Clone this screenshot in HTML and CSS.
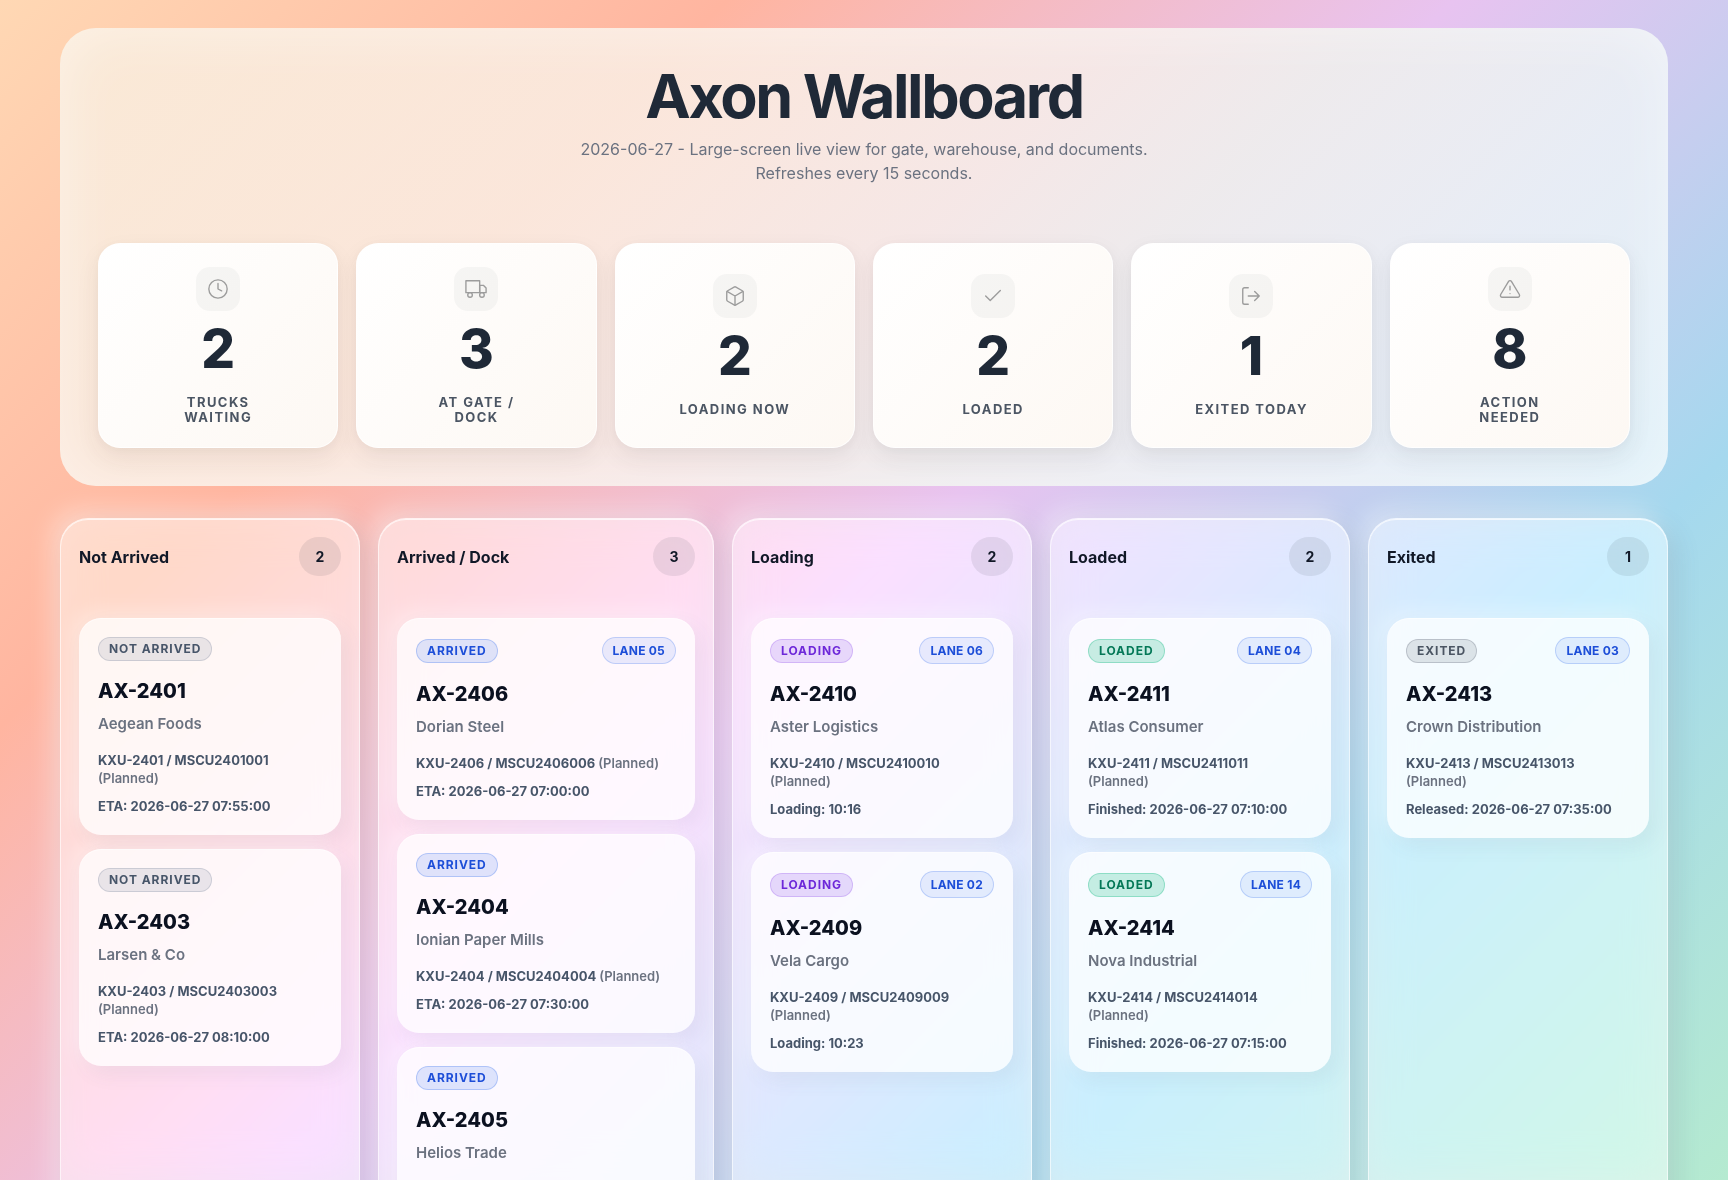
FILE: index.html
```html
<!DOCTYPE html>
<html lang="en">
<head>
<meta charset="utf-8">
<meta name="viewport" content="width=device-width, initial-scale=1">
<title>Axon Wallboard</title>
<link rel="stylesheet" href="styles.css">
</head>
<body>
<main class="page">
  <header class="hero">
    <h1 class="hero-title">Axon Wallboard</h1>
    <p class="hero-sub">2026-06-27 - Large-screen live view for gate, warehouse, and documents. Refreshes every 15 seconds.</p>
    <section class="stats" aria-label="Today's totals">
      <div class="stat">
        <span class="stat-icon"><svg viewBox="0 0 24 24"><circle cx="12" cy="12" r="10"/><path d="M12 6v6l4 2"/></svg></span>
        <strong class="stat-value">2</strong>
        <span class="stat-label">Trucks waiting</span>
      </div>
      <div class="stat">
        <span class="stat-icon"><svg viewBox="0 0 24 24"><path d="M1 3h15v13H1z"/><path d="M16 8h4l3 3v5h-7z"/><circle cx="5.5" cy="18.5" r="2.5"/><circle cx="18.5" cy="18.5" r="2.5"/></svg></span>
        <strong class="stat-value">3</strong>
        <span class="stat-label">At gate / dock</span>
      </div>
      <div class="stat">
        <span class="stat-icon"><svg viewBox="0 0 24 24"><path d="M21 16V8a2 2 0 0 0-1-1.73l-7-4a2 2 0 0 0-2 0l-7 4A2 2 0 0 0 3 8v8a2 2 0 0 0 1 1.73l7 4a2 2 0 0 0 2 0l7-4A2 2 0 0 0 21 16z"/><path d="M3.27 6.96L12 12.01l8.73-5.05M12 22.08V12"/></svg></span>
        <strong class="stat-value">2</strong>
        <span class="stat-label">Loading now</span>
      </div>
      <div class="stat">
        <span class="stat-icon"><svg viewBox="0 0 24 24"><path d="M20 6L9 17l-5-5"/></svg></span>
        <strong class="stat-value">2</strong>
        <span class="stat-label">Loaded</span>
      </div>
      <div class="stat">
        <span class="stat-icon"><svg viewBox="0 0 24 24"><path d="M9 21H5a2 2 0 0 1-2-2V5a2 2 0 0 1 2-2h4"/><path d="M16 17l5-5-5-5M21 12H9"/></svg></span>
        <strong class="stat-value">1</strong>
        <span class="stat-label">Exited today</span>
      </div>
      <div class="stat">
        <span class="stat-icon"><svg viewBox="0 0 24 24"><path d="M10.29 3.86L1.82 18a2 2 0 0 0 1.71 3h16.94a2 2 0 0 0 1.71-3L13.71 3.86a2 2 0 0 0-3.42 0z"/><path d="M12 9v4M12 17h.01"/></svg></span>
        <strong class="stat-value">8</strong>
        <span class="stat-label">Action needed</span>
      </div>
    </section>
  </header>

  <section class="board" aria-label="Truck board">
    <section class="column">
      <header class="column-head"><h2 class="column-title">Not Arrived</h2><span class="count">2</span></header>
      <article class="card">
        <div class="card-top"><span class="badge badge-slate">Not arrived</span></div>
        <h3 class="card-ref">AX-2401</h3>
        <p class="card-client">Aegean Foods</p>
        <p class="card-line">KXU-2401 / MSCU2401001 <span class="muted">(Planned)</span></p>
        <p class="card-line">ETA: 2026-06-27 07:55:00</p>
      </article>
      <article class="card">
        <div class="card-top"><span class="badge badge-slate">Not arrived</span></div>
        <h3 class="card-ref">AX-2403</h3>
        <p class="card-client">Larsen &amp; Co</p>
        <p class="card-line">KXU-2403 / MSCU2403003 <span class="muted">(Planned)</span></p>
        <p class="card-line">ETA: 2026-06-27 08:10:00</p>
      </article>
    </section>

    <section class="column">
      <header class="column-head"><h2 class="column-title">Arrived / Dock</h2><span class="count">3</span></header>
      <article class="card">
        <div class="card-top"><span class="badge badge-blue">Arrived</span><span class="lane">LANE 05</span></div>
        <h3 class="card-ref">AX-2406</h3>
        <p class="card-client">Dorian Steel</p>
        <p class="card-line">KXU-2406 / MSCU2406006 <span class="muted">(Planned)</span></p>
        <p class="card-line">ETA: 2026-06-27 07:00:00</p>
      </article>
      <article class="card">
        <div class="card-top"><span class="badge badge-blue">Arrived</span></div>
        <h3 class="card-ref">AX-2404</h3>
        <p class="card-client">Ionian Paper Mills</p>
        <p class="card-line">KXU-2404 / MSCU2404004 <span class="muted">(Planned)</span></p>
        <p class="card-line">ETA: 2026-06-27 07:30:00</p>
      </article>
      <article class="card card-open">
        <div class="card-top"><span class="badge badge-blue">Arrived</span></div>
        <h3 class="card-ref">AX-2405</h3>
        <p class="card-client">Helios Trade</p>
      </article>
    </section>

    <section class="column">
      <header class="column-head"><h2 class="column-title">Loading</h2><span class="count">2</span></header>
      <article class="card">
        <div class="card-top"><span class="badge badge-violet">Loading</span><span class="lane">LANE 06</span></div>
        <h3 class="card-ref">AX-2410</h3>
        <p class="card-client">Aster Logistics</p>
        <p class="card-line">KXU-2410 / MSCU2410010 <span class="muted">(Planned)</span></p>
        <p class="card-line">Loading: 10:16</p>
      </article>
      <article class="card">
        <div class="card-top"><span class="badge badge-violet">Loading</span><span class="lane">LANE 02</span></div>
        <h3 class="card-ref">AX-2409</h3>
        <p class="card-client">Vela Cargo</p>
        <p class="card-line">KXU-2409 / MSCU2409009 <span class="muted">(Planned)</span></p>
        <p class="card-line">Loading: 10:23</p>
      </article>
    </section>

    <section class="column">
      <header class="column-head"><h2 class="column-title">Loaded</h2><span class="count">2</span></header>
      <article class="card">
        <div class="card-top"><span class="badge badge-green">Loaded</span><span class="lane">LANE 04</span></div>
        <h3 class="card-ref">AX-2411</h3>
        <p class="card-client">Atlas Consumer</p>
        <p class="card-line">KXU-2411 / MSCU2411011 <span class="muted">(Planned)</span></p>
        <p class="card-line">Finished: 2026-06-27 07:10:00</p>
      </article>
      <article class="card">
        <div class="card-top"><span class="badge badge-green">Loaded</span><span class="lane">LANE 14</span></div>
        <h3 class="card-ref">AX-2414</h3>
        <p class="card-client">Nova Industrial</p>
        <p class="card-line">KXU-2414 / MSCU2414014 <span class="muted">(Planned)</span></p>
        <p class="card-line">Finished: 2026-06-27 07:15:00</p>
      </article>
    </section>

    <section class="column">
      <header class="column-head"><h2 class="column-title">Exited</h2><span class="count">1</span></header>
      <article class="card">
        <div class="card-top"><span class="badge badge-gray">Exited</span><span class="lane">LANE 03</span></div>
        <h3 class="card-ref">AX-2413</h3>
        <p class="card-client">Crown Distribution</p>
        <p class="card-line">KXU-2413 / MSCU2413013 <span class="muted">(Planned)</span></p>
        <p class="card-line">Released: 2026-06-27 07:35:00</p>
      </article>
    </section>
  </section>
</main>
</body>
</html>
```
FILE: styles.css
```css
*, *::before, *::after { box-sizing: border-box; }

html { min-height: 100%; }

body {
  margin: 0;
  min-height: 100vh;
  font-family: Inter, "Liberation Sans", sans-serif;
  color: #1f2937;
  background: linear-gradient(135deg, #ffd8b4 0%, #ffb5a0 25%, #e8c3f0 50%, #a5d8ee 75%, #b5ead0 100%) fixed;
}

h1, h2, h3, p { margin: 0; }

.page {
  display: flex;
  flex-direction: column;
  gap: 32px;
  padding: 28px 60px;
}

/* Summary panel */
.hero {
  padding: 38px;
  border-radius: 36px;
  text-align: center;
  background: linear-gradient(
    135deg,
    rgba(249, 238, 222, 0.82) 0%,
    rgba(250, 240, 231, 0.84) 35%,
    rgba(246, 238, 234, 0.86) 52%,
    rgba(238, 239, 237, 0.9) 64%,
    rgba(236, 242, 246, 0.86) 80%,
    rgba(238, 248, 252, 0.78) 100%
  );
  box-shadow: inset 0 0 60px rgba(255, 255, 255, 0.45);
}

.hero-title {
  font-size: 61px;
  line-height: 61px;
  font-weight: 700;
  letter-spacing: -0.04em;
  color: #1f2937;
}

.hero-sub {
  max-width: 620px;
  margin: 10px auto 58px;
  font-size: 16px;
  line-height: 24px;
  color: #6b7280;
}

.stats {
  display: grid;
  grid-template-columns: repeat(6, 1fr);
  gap: 18px;
}

.stat {
  display: flex;
  flex-direction: column;
  align-items: center;
  justify-content: center;
  min-height: 205px;
  padding: 22px;
  border: 1px solid rgba(255, 255, 255, 0.8);
  border-radius: 22px;
  background: linear-gradient(135deg, #ffffff, #fdf8f3);
  box-shadow: 0 10px 24px rgba(60, 50, 50, 0.07), 0 2px 8px rgba(60, 50, 50, 0.03);
}

.stat-icon {
  display: grid;
  place-items: center;
  width: 44px;
  height: 44px;
  border-radius: 14px;
  background: rgba(31, 41, 55, 0.04);
}

.stat-icon svg {
  width: 22px;
  height: 22px;
  fill: none;
  stroke: #9c9c9c;
  stroke-width: 1.5;
  stroke-linecap: round;
  stroke-linejoin: round;
}

.stat-value {
  margin: 11px 0 19px;
  font-size: 53px;
  line-height: 54px;
  font-weight: 800;
}

.stat-label {
  max-width: 120px;
  font-size: 13px;
  line-height: 15px;
  font-weight: 700;
  letter-spacing: 0.11em;
  text-transform: uppercase;
  color: #4b5563;
}

/* Status columns */
.board {
  display: grid;
  grid-template-columns: 25fr 28fr 25fr 25fr 25fr;
  gap: 18px;
}

.column {
  display: flex;
  flex-direction: column;
  gap: 14px;
  min-height: 740px;
  padding: 18px;
  border: 1px solid rgba(255, 255, 255, 0.6);
  border-radius: 28px;
  background: rgba(255, 255, 255, 0.52);
  backdrop-filter: blur(20px) saturate(1.5);
  box-shadow:
    inset 0 1px 0 rgba(255, 255, 255, 0.7),
    8px 8px 24px rgba(80, 90, 110, 0.15),
    -8px -8px 24px rgba(255, 255, 255, 0.4);
}

.column-head {
  display: flex;
  align-items: center;
  justify-content: space-between;
  margin-bottom: 23px;
  padding-bottom: 5px;
}

.column-title {
  font-size: 16px;
  line-height: 24px;
  font-weight: 700;
  color: #111827;
}

.count {
  min-width: 42px;
  padding: 10px 0;
  border-radius: 21px;
  font-size: 14px;
  line-height: 19px;
  font-weight: 700;
  text-align: center;
  color: #111827;
  background: rgba(31, 41, 55, 0.09);
}

.card {
  padding: 19px 19px 20px;
  border-radius: 22px;
  background: rgba(255, 255, 255, 0.78);
  box-shadow:
    inset 0 1px 0 rgba(255, 255, 255, 0.6),
    6px 8px 20px rgba(80, 90, 110, 0.08),
    -6px -6px 20px rgba(255, 255, 255, 0.35);
}

.card-open { flex: 1; }

.card-top {
  display: flex;
  align-items: center;
  justify-content: space-between;
}

.badge {
  padding: 4px 10px;
  border: 1px solid;
  border-radius: 12px;
  font-size: 12px;
  line-height: 14px;
  font-weight: 700;
  letter-spacing: 0.08em;
  text-transform: uppercase;
}

.badge-slate { color: #475569; background: rgba(100, 116, 139, 0.14); border-color: rgba(100, 116, 139, 0.22); }
.badge-gray { color: #4b5563; background: rgba(107, 114, 128, 0.18); border-color: rgba(107, 114, 128, 0.3); }
.badge-blue { color: #1d4ed8; background: rgba(37, 99, 235, 0.15); border-color: rgba(37, 99, 235, 0.25); }
.badge-violet { color: #6d28d9; background: rgba(130, 60, 234, 0.18); border-color: rgba(130, 60, 234, 0.22); }
.badge-green { color: #047857; background: rgba(16, 185, 129, 0.22); border-color: rgba(16, 185, 129, 0.3); }

.lane {
  padding: 5px 10px;
  border: 1px solid rgba(37, 99, 235, 0.22);
  border-radius: 14px;
  font-size: 12px;
  line-height: 15px;
  font-weight: 700;
  letter-spacing: 0.02em;
  color: #1d4ed8;
  background: rgba(37, 99, 235, 0.1);
}

.card-ref {
  margin-top: 17px;
  font-size: 20px;
  line-height: 26px;
  font-weight: 800;
  color: #0b1120;
}

.card-client {
  margin: 11px 0 18px;
  font-size: 15px;
  line-height: 18px;
  font-weight: 600;
  color: #6b7280;
}

.card-line {
  margin-top: 10px;
  font-size: 13px;
  line-height: 18px;
  font-weight: 700;
  color: #475569;
}

.muted {
  font-weight: 600;
  color: #6b7280;
}
```
